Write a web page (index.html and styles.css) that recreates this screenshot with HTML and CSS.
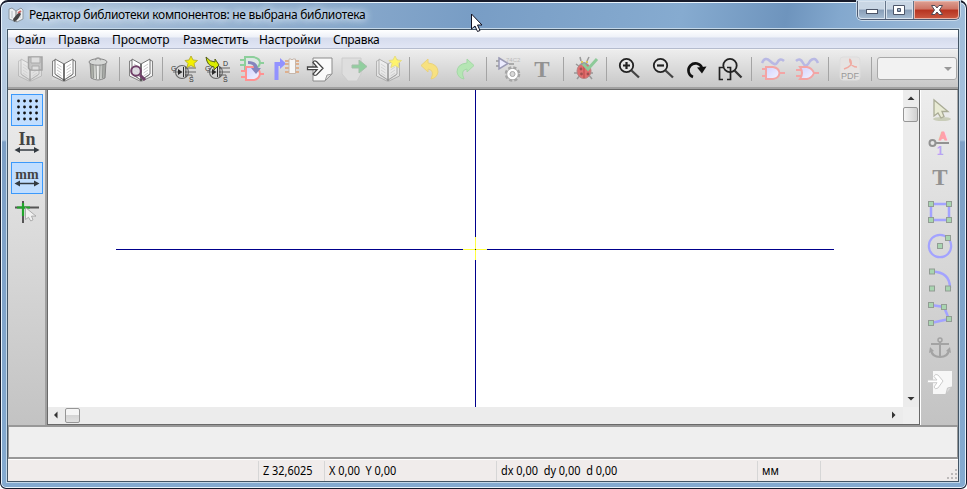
FILE: index.html
```html
<!DOCTYPE html>
<html lang="ru">
<head>
<meta charset="utf-8">
<title>Редактор библиотеки компонентов</title>
<link rel="stylesheet" href="styles.css">
</head>
<body>
<svg class="defs" width="0" height="0">
  <defs>
    <linearGradient id="gate" x1="0" y1="0" x2="1" y2="1"><stop offset="0" stop-color="#d2d2ff"/><stop offset="1" stop-color="#f4f4ff"/></linearGradient>
    <linearGradient id="bin" x1="0" y1="0" x2="1" y2="0"><stop offset="0" stop-color="#95998f"/><stop offset=".45" stop-color="#f0f1ef"/><stop offset="1" stop-color="#959894"/></linearGradient>
    <g id="book">
      <path d="M-12-6V11H12V-6Z" fill="#d8d8d8"/>
      <path d="M-11.500-8L-8-9V6L0 11 8 6V-9L11.500-8V7L1 12H-1L-11.500 7Z" fill="#f4f4f4" stroke="#777" stroke-width=".9"/>
      <path d="M-9-10L0-5 9-10V5L0 11-9 5Z" fill="#fff" stroke="#666" stroke-width=".9"/>
      <path d="M-7-5L-2.500-2M-7-2L-2.500 1M-7 1L-2.500 4M-7 4L-2.500 7M7-5L2.500-2M7-2L2.500 1M7 1L2.500 4M7 4L2.500 7" stroke="#c8c8c8"/>
      <path d="M0-5V12" stroke="#444" stroke-width="1.500"/>
    </g>
    <g id="fet">
      <path d="M-11 3H-5M1-1H12M1 3H12M1 6H8V8" fill="none" stroke="#666" stroke-width="1"/>
      <circle cx="-2" cy="3" r="6.500" fill="none" stroke="#666" stroke-width="1.100"/>
      <path d="M-6 0L-1.500 3-6 6ZM-1-2H0V8H-1ZM1.500-2H2.300V8H1.500Z" fill="#2a2a2a"/>
      <text x="-13" y="1.500" class="pin">G</text><text x="5" y="13" class="pin">S</text>
    </g>
    <path id="star" d="M7-13L9-9 13.500-8.500 10-5.500 11-1.500 7-3.500 3-1.500 4-5.500 1-8.500 5-9Z"/>
    <path id="pointer" d="M-6-10V6L-2 3 1 8 4 6.500 2 1.500H8Z"/>
    <g id="dims"><path d="M-9 9H9" stroke="#333a40" stroke-width="1.500"/><path d="M-12.500 9L-7 6V12ZM12.500 9L7 6V12Z" fill="#333a40"/></g>
    <rect id="node" x="-2.500" y="-2.500" width="5" height="5" fill="#a8d5b0" stroke="#929c94"/>
  </defs>
</svg>
<div class="window">
  <header class="titlebar">
    <svg class="app-icon" viewBox="-8 -8 16 16"><path d="M-7-6L-4-7 0-4 5-7 7-5V4L1 7-7 4Z" fill="#eef1f3" stroke="#8b969f"/><path d="M0-4V7" stroke="#777"/><path d="M-4-4V3M4-4V3" stroke="#b6bcc1"/><path d="M3-3L-3 4-2 7 2 4 5-1Z" fill="#444"/><path d="M2-2L5-4" stroke="#c66" stroke-width="2"/></svg>
    <span class="caption">Редактор библиотеки компонентов: не выбрана библиотека</span>
    <div class="controls">
      <span class="ctl"><svg viewBox="0 0 16 14"><rect x="2.500" y="5.500" width="11" height="4" fill="#fff" stroke="#4c5568"/></svg></span>
      <span class="ctl"><svg viewBox="0 0 16 14"><path d="M1.500 1.500H12.500V10.500H1.500ZM5.500 4.500V7.500H8.500V4.500Z" fill="#fff" fill-rule="evenodd" stroke="#4c5568"/></svg></span>
      <span class="ctl close"><svg viewBox="0 0 16 14"><path d="M2.500 1.500H6L8 4 10 1.500H13.500L10.500 6 13.500 10.500H10L8 8 6 10.500H2.500L5.500 6Z" fill="#fff" stroke="#514a55"/></svg></span>
    </div>
    <svg class="mouse" viewBox="0 0 14 20"><path d="M2.500 1V16L6 13 8.500 18.500 11 17.500 8.500 12H13Z" fill="#fff" stroke="#112"/></svg>
  </header>
  <main class="client">
    <nav class="menu"><span class="m1">Файл</span><span class="m2">Правка</span><span class="m3">Просмотр</span><span class="m4">Разместить</span><span class="m5">Настройки</span><span class="m6">Справка</span></nav>
    <div class="toolbar">
      <svg viewBox="-17 -17 34 34"><g opacity=".3"><use href="#book"/></g><path d="M-1.500-12H12V1H0L-1.500-1Z" fill="#c4c4c4" stroke="#a3a3a3" stroke-width="1.500"/><path d="M1-12H10V-6H1ZM2-3H9V1H2Z" fill="#dedede" stroke="#aaa"/></svg>
      <svg viewBox="-17 -17 34 34"><use href="#book"/></svg>
      <svg viewBox="-17 -17 34 34"><path d="M-8-7H8L7 9Q0 13-7 9Z" fill="url(#bin)" stroke="#888"/><path d="M-5-4L-4.500 9M-2-4L-1.500 10M2-4L1.500 10M5-4L4.500 9" stroke="#8a8d8a" stroke-width=".9"/><ellipse cy="-7" rx="9" ry="3.200" fill="#d6d8d6" stroke="#888"/><path d="M-3-9Q0-13 3-9" fill="#ddd" stroke="#999" stroke-width="1.500"/></svg>
      <i></i>
      <svg viewBox="-17 -17 34 34"><use href="#book"/><circle cx="-5" cy="2" r="4.800" fill="#d8d4dc" fill-opacity=".8" stroke="#704068" stroke-width="2"/><path d="M-1 6L4 11" stroke="#704068" stroke-width="3"/></svg>
      <i></i>
      <svg viewBox="-17 -17 34 34"><use href="#fet"/><use href="#star" fill="#f4f000" stroke="#b9b336"/></svg>
      <svg viewBox="-17 -17 34 34"><use href="#fet"/><text x="5" y="-3" class="pin">D</text><path d="M-12-12Q-8-7-3-7V-10L1-4-4 1V-2Q-11-3-12-12Z" fill="#d9ed00" stroke="#555e15"/></svg>
      <svg viewBox="-17 -17 34 34"><path d="M-12-9H-7M-12-4H-7M8-6H12" stroke="#8dcf9b" stroke-width="2"/><path d="M-7-12H1Q8-11 8-6 7-1 1 0H-7Z" fill="#dde7e4" stroke="#8dcf9b" stroke-width="2"/><path d="M-11 2H-6M-11 8H-6M7 5H12" stroke="#ff9292" stroke-width="2"/><path d="M-6-2H2Q8 0 8 5 7 10 2 11H-6Z" fill="url(#gate)" stroke="#ff9292" stroke-width="2"/><path d="M-4-8Q5-8 6-1H9L4 5-1-1H2Q2-5-4-5Z" fill="#8585bd"/></svg>
      <svg viewBox="-17 -17 34 34"><path d="M-9.500 11V-5H-5" fill="none" stroke="#9292ff" stroke-width="4"/><path d="M-6-11L0-5.500-6 0Z" fill="#9292ff"/><path d="M-1-8H3M-1-5H3M-1-1H3M-1 3H3M9-8H13M9-5H13M9-1H13M9 3H13" stroke="#deb08e" stroke-width="2"/><path d="M3-10H5Q6-8 7-10H9.500V4.500H3Z" fill="#f6f6f6" stroke="#c6b6aa"/></svg>
      <svg viewBox="-17 -17 34 34"><path d="M-7-11H12V5L5 12H-7Z" fill="#fafafa" stroke="#8b8b8b"/><path d="M5 12L7 6 12 5Z" fill="#ddd" stroke="#999"/><path d="M-12.500-2H-3L-7-6.500Q-6-9-3.500-7.500L3-.7-3.500 6Q-6 7-7 5L-3 .7H-12.500Z" fill="#fff" stroke="#444" stroke-width="1.300"/></svg>
      <svg viewBox="-17 -17 34 34"><path d="M-12-11H7V5L3 12H-6L-12 5Z" fill="#dedede" stroke="#ccc"/><path d="M-2-4H5V-9L13-2.500 5 4V-1H-2Z" fill="#91cf9f" stroke="#a4bfa9"/></svg>
      <svg viewBox="-17 -17 34 34"><g opacity=".45"><use href="#book"/></g><use href="#star" fill="#fff46c" stroke="#e6dd83"/></svg>
      <i></i>
      <svg viewBox="-17 -17 34 34"><path d="M-10-3.500L-3-10V-6Q7-5 7 3 6 9 0 10 4 1-3 0V3Z" fill="#f7e180" stroke="#ead27a"/></svg>
      <svg viewBox="-17 -17 34 34"><path d="M9-3.500L2-10V-6Q-8-5-8 3-7 9-1 10-5 1 2 0V3Z" fill="#b5e6b4" stroke="#a4d8a6"/></svg>
      <i></i>
      <svg viewBox="-17 -17 34 34"><text x="-2" y="-7" class="hc">74C2</text><path d="M-12-8H-9M-12-3H-9M1-5H6" stroke="#999" stroke-width="1.300"/><path d="M-9-11L0-5.500-9 0Z" fill="#ececff" stroke="#9a9ab5" stroke-width="1.500"/><circle cx="4.500" cy="5" r="6.300" fill="none" stroke="#a5a5a5" stroke-width="3" stroke-dasharray="3 1.948"/><circle cx="4.500" cy="5" r="5" fill="none" stroke="#a5a5a5" stroke-width="2.200"/><circle cx="4.500" cy="5" r="4" fill="#d8d8d8" stroke="#fff" stroke-width="2.600"/><circle cx="4.500" cy="5" r="2.500" fill="#d8d8d8" stroke="#aaa"/></svg>
      <svg viewBox="-17 -17 34 34"><text x="0" y="8" class="bigt">T</text></svg>
      <i></i>
      <svg viewBox="-17 -17 34 34"><path d="M-9-5L-5-2M-11 4H8M-8 10L-4 5M7 10L3 5M-5-12L-4-8M4-12L2-8" stroke="#999" stroke-width="1.500"/><ellipse cx="-1" cy="2" rx="7" ry="7.500" fill="#e06e6e" stroke="#b88080"/><path d="M-6-4Q-1-10 4-4Z" fill="#999"/><path d="M-4-7H-2M1-7H3" stroke="#d8c65c" stroke-width="2"/><path d="M-1-5V9" stroke="#b44"/><g fill="#a05050"><circle cx="-4" cy="0" r="1.400"/><circle cx="-3.500" cy="5" r="1.400"/><circle cx="3" cy="5" r="1.400"/></g><path d="M-2-5L3 0 12-10" fill="none" stroke="#8dca99" stroke-width="3"/></svg>
      <i></i>
      <svg viewBox="-17 -17 34 34"><circle cx="-1.500" cy="-3.500" r="6.700" fill="#eee" fill-opacity=".5" stroke="#222" stroke-width="1.800"/><path d="M3.500 1.500L11 8.500" stroke="#444" stroke-width="2.300"/><path d="M-5-3.500H2M-1.500-7V0" stroke="#222" stroke-width="2.200"/></svg>
      <svg viewBox="-17 -17 34 34"><circle cx="-1.500" cy="-3.500" r="6.700" fill="#eee" fill-opacity=".5" stroke="#222" stroke-width="1.800"/><path d="M3.500 1.500L11 8.500" stroke="#444" stroke-width="2.300"/><path d="M-5-3.500H2" stroke="#222" stroke-width="2.200"/></svg>
      <svg viewBox="-17 -17 34 34"><path d="M-3 8A7 7 0 1 1 6-1" fill="none" stroke="#111" stroke-width="2.600"/><path d="M1-1.500L10.500-2.500 6 4.500Z" fill="#111"/></svg>
      <svg viewBox="-17 -17 34 34"><path d="M-7-1.500H-10.500V10.500H-7M-3 10.500H.5V-1.500H-3" fill="none" stroke="#222" stroke-width="1.700"/><circle cx="0" cy="-3.500" r="6.700" fill="none" stroke="#222" stroke-width="1.800"/><path d="M4.500 1.500L11.500 8.500" stroke="#333" stroke-width="2.300"/></svg>
      <i></i>
      <svg viewBox="-17 -17 34 34"><path d="M-11-6Q-8-13-3-8T4-6Q7-12 11-8" fill="none" stroke="#b8b8e4" stroke-width="2.500"/><path d="M-11 0H-7M-11 7H-7M7 4H12" stroke="#f3a5a5" stroke-width="2"/><path d="M-7-2H0Q6-1 6.500 4 6 9 0 10H-7Z" fill="url(#gate)" stroke="#f3a5a5" stroke-width="2"/></svg>
      <svg viewBox="-17 -17 34 34"><path d="M-11-8Q-7-12-4-6T3-8Q8-13 11-6" fill="none" stroke="#b8b8e4" stroke-width="2.500"/><path d="M-11 1H-5M-11 7H-5M7 4H12" stroke="#f3a5a5" stroke-width="2"/><path d="M-7-2H0Q5-1 7 4 5 9 0 10H-7Q-3 4-7-2Z" fill="url(#gate)" stroke="#f3a5a5" stroke-width="2"/></svg>
      <i></i>
      <svg viewBox="-17 -17 34 34"><rect x="-10" y="-12" width="20" height="23" rx="3" fill="#e6e3e2" stroke="#ddd"/><path d="M-6 0Q3-3 1-8-1-12 0-7 2-2 7-2" fill="none" stroke="#f0aaa1" stroke-width="1.500"/><text x="0" y="10" class="pdf">PDF</text></svg>
      <i></i>
      <div class="combo"></div>
    </div>
    <section class="work">
      <aside class="left">
        <svg class="on" viewBox="-16 -16 32 32"><path d="M-8.500-9H10.500M-8.500-3H10.500M-8.500 3H10.500M-8.500 9H10.500" stroke="#111" stroke-width="2.800" stroke-linecap="round" stroke-dasharray="0.010 6"/></svg>
        <svg viewBox="-16 -16 32 32"><text x="0" y="0.500" class="unit">In</text><use href="#dims" y="-3"/></svg>
        <svg class="on" viewBox="-16 -16 32 32"><text x="0" y="1" class="unit wide">mm</text><use href="#dims" y="-3.500"/></svg>
        <svg viewBox="-16 -16 32 32"><path d="M-12-4.500H12M-4-11V11" stroke="#555" stroke-width="2"/><path d="M-10-4.500H3M-4-9V4" stroke="#20a52b" stroke-width="2.200"/><use href="#pointer" transform="translate(3 3) scale(.75)" fill="#f1f1f1" stroke="#999"/></svg>
      </aside>
      <div class="canvas">
        <svg class="sheet" viewBox="0 0 855 317"><path d="M427.500 0V147M427.500 170V317M68 159.500H415M439 159.500H786" stroke="#00008c"/><path d="M427.500 147V170M415 159.500H439" stroke="#ffff40"/><path d="M427.500 159V160" stroke="#202040"/></svg>
        <div class="vscroll"><svg viewBox="0 0 16 16"><path d="M4.500 10L8 6.500 11.500 10Z" fill="#333"/></svg><b></b><svg class="end" viewBox="0 0 16 16"><path d="M4.500 6H11.500L8 9.500Z" fill="#333"/></svg></div>
        <div class="hscroll"><svg viewBox="0 0 16 16"><path d="M9.500 4.500V11.500L6 8Z" fill="#333"/></svg><b></b><svg class="end" viewBox="0 0 16 16"><path d="M6 4.500V11.500L9.500 8Z" fill="#333"/></svg></div>
        <div class="corner"></div>
      </div>
      <aside class="right">
        <svg viewBox="-17 -17 34 34"><ellipse cx="2" cy="9" rx="9" ry="2" fill="#c9cdb9"/><use href="#pointer" fill="#e8ead4" stroke="#a9ab95" stroke-width="1.300"/></svg>
        <svg viewBox="-17 -17 34 34"><circle cx="-7.500" cy="-1" r="3" fill="none" stroke="#929292" stroke-width="2"/><path d="M-4.500-1H9" stroke="#929292" stroke-width="2"/><text x="3" y="-4" class="pa">A</text><text x="0" y="11" class="p1">1</text></svg>
        <svg viewBox="-17 -17 34 34"><text x="0" y="7" class="bigt">T</text></svg>
        <svg viewBox="-17 -17 34 34"><path d="M-9-8H9V8H-9Z" fill="none" stroke="#a3a3ff" stroke-width="2.500"/><use href="#node" x="-9" y="-8"/><use href="#node" x="9" y="-8"/><use href="#node" x="-9" y="8"/><use href="#node" x="9" y="8"/></svg>
        <svg viewBox="-17 -17 34 34"><circle r="11.200" fill="none" stroke="#a3a3ff" stroke-width="2.200"/><use href="#node"/><use href="#node" x="8" y="-8"/></svg>
        <svg viewBox="-17 -17 34 34"><path d="M-8-8.500Q10-8 10 8" fill="none" stroke="#a3a3ff" stroke-width="2.500"/><use href="#node" x="-8" y="-8.500"/><use href="#node" x="-8" y="8.500"/><use href="#node" x="8" y="8.500"/></svg>
        <svg viewBox="-17 -17 34 34"><path d="M-9-9L4-7 9 5-9 9" fill="none" stroke="#a3a3ff" stroke-width="2.500"/><use href="#node" x="-9" y="-9"/><use href="#node" x="4" y="-7"/><use href="#node" x="9" y="5"/><use href="#node" x="-9" y="9"/></svg>
        <svg viewBox="-17 -17 34 34"><path d="M0-6V9M-9-4H9M-9 2Q-8 9 0 9T9 2" fill="none" stroke="#a3a3a3" stroke-width="2"/><circle cy="-8" r="2" fill="none" stroke="#a3a3a3" stroke-width="1.500"/><path d="M-11 5L-10-1-6 3ZM11 5L10-1 6 3Z" fill="#a3a3a3"/></svg>
        <svg viewBox="-17 -17 34 34"><path d="M-7-11H12V5L6 12H-7Z" fill="#f7f7f7"/><path d="M6 12L7.500 6 12 5Z" fill="#ddd" stroke="#c5c5c5"/><path d="M-12.500-2H-3L-6-5.500Q-5-9-2-7L3-1-2 6Q-5 8-6 5L-3 .7H-12.500Z" fill="#fff" stroke="#ccc"/></svg>
      </aside>
    </section>
    <div class="messages"></div>
    <footer class="status"><span class="s0"></span><span class="s1"><em>Z 32,6025</em></span><span class="s2"><em>X 0,00&nbsp; Y 0,00</em></span><span class="s3"><em>dx 0,00&nbsp; dy 0,00&nbsp; d 0,00</em></span><span class="s4"><em>мм</em></span><span class="s5"></span><svg class="grip" viewBox="0 0 12 12"><path d="M9 1h2v2H9zM9 5h2v2H9zM5 5h2v2H5zM9 9h2v2H9zM5 9h2v2H5zM1 9h2v2H1z" fill="#bdbaba"/></svg></footer>
  </main>
</div>
</body>
</html>
```
FILE: styles.css
```css
* { box-sizing: border-box; }
body { margin: 0; width: 967px; height: 489px; overflow: hidden; background: #fff; font: 12px "Noto Sans", sans-serif; color: #000; }
svg { display: block; flex: none; }
.defs { position: absolute; }
.window { position: relative; width: 967px; height: 489px; padding: 1px 7px 6px 6px; border: 1px solid #171b2b; border-top-width: 2px; border-radius: 8px 8px 6px 6px; box-shadow: inset 0 0 0 1px #e8f3fc;
  background: linear-gradient(180deg, #ffffff00 0 138px, #7d9fc5 140px, #84aad0), linear-gradient(100deg, #b7cce2 0, #a5bdd7 10%, #789dc5 45%, #86abd0 65%, #6e94bd 75%, #83a8ce 80%, #b4cbe2 100%); }
.titlebar { height: 26px; display: flex; align-items: flex-start; padding-left: 1px; }
.app-icon { width: 16px; height: 16px; margin: 4px 5px 0 0; }
.caption { margin-top: 3px; white-space: nowrap; line-height: 17px; letter-spacing: -.3px; text-shadow: 0 0 6px #dbe7f3, 0 0 8px #dbe7f3, 0 0 10px #dbe7f3; }
.controls { margin: -2px -1px 0 auto; display: flex; width: 103px; height: 19px; border: 1px solid #4c5970; border-top: 0; border-radius: 0 0 5px 5px; box-shadow: 0 0 0 1px #c8d9e9; }
.ctl { width: 28px; padding: 3px 6px; background: linear-gradient(#c9d6e4 0 45%, #899eb7 50%, #a7bdd3); border-right: 1px solid #65758a; box-shadow: inset 0 0 0 1px #d9e3ee; }
.ctl:first-child { border-radius: 0 0 0 4px; }
.ctl svg { width: 16px; height: 14px; }
.ctl.close { flex: 1; padding-left: 15px; border: 0; border-radius: 0 0 4px 0; background: linear-gradient(#dda194, #ce7465 45%, #b63320 50%, #cc5a43); box-shadow: inset 0 0 0 1px #e9b5a9; }
.mouse { position: absolute; left: 468px; top: 11px; width: 14px; height: 20px; z-index: 4; }
.client { width: 952px; height: 453px; border: 1px solid #435565; display: flex; flex-direction: column; background: #eee; box-shadow: 0 0 0 1px #c4d8e9; }
.menu { height: 20px; flex: none; display: flex; padding-left: 7px; line-height: 20px; letter-spacing: -.1px; background: linear-gradient(#fff, #eef1f8 7px, #d6dced 8px, #e1e6f5 18px, #b5bcce 18px 19px, #f5f5f5 19px); }
.menu span { white-space: nowrap; flex: none; }
.m1 { width: 43px; } .m2 { width: 54px; } .m3 { width: 71px; } .m4 { width: 76px; } .m5 { width: 74px; } .m6 { width: 50px; letter-spacing: -.3px; }
.toolbar { height: 40px; flex: none; display: flex; padding: 1px 0 0 5px; background: linear-gradient(#ededed, #c7c7c7 37px, #a0a0a0 37px 39px, #696969 39px); }
.toolbar > svg { width: 34px; height: 34px; margin-top: 1px; }
.toolbar i { width: 9px; height: 24px; margin-top: 6px; flex: none; background: linear-gradient(#a4a4a4, #a4a4a4) 4px 0 / 1px 100% no-repeat; }
.combo { width: 80px; height: 23px; margin: 6px 0 0 1px; border: 1px solid #a9a9a9; border-radius: 3px; background: #f2f2f2; position: relative; }
.combo::after { content: ""; position: absolute; right: 4px; top: 9px; border: 4px solid transparent; border-top-color: #999; border-bottom: 0; }
.work { height: 335px; flex: none; display: flex; }
.left { width: 39px; padding: 4px 3px; background: linear-gradient(#ededed, #c3c3c3); border-right: 2px solid #a0a0a0; }
.left svg { width: 32px; height: 32px; margin-bottom: 2px; }
.left svg.on { background: #c1deff; box-shadow: inset 0 0 0 1px #3b99fb; }
.canvas { width: 873px; display: grid; grid-template: 317px 17px / 855px 16px; border-left: 1px solid #696969; border-right: 1px solid #696969; border-bottom: 1px solid #696969; background: #fff; }
.sheet { width: 855px; height: 317px; shape-rendering: crispEdges; }
.vscroll, .hscroll { display: flex; background: #ececec; }
.vscroll { flex-direction: column; }
.canvas svg:not(.sheet) { width: 16px; height: 16px; }
.canvas .end { margin-top: auto; }
.hscroll .end { margin: 0 0 0 auto; }
.hscroll { padding-right: 1px; }
.vscroll b { width: 15px; height: 15px; border: 1px solid #969696; border-radius: 2px; background: linear-gradient(90deg, #f4f4f4, #d0d0d0); margin-top: 1px; }
.hscroll b { width: 15px; height: 15px; border: 1px solid #969696; border-radius: 2px; background: linear-gradient(#f5f5f5 45%, #d5d5d5 50%, #e0e0e0); margin: 1px 0 0 1px; }
.corner { background: #efefef; }
.right { width: 38px; border-left: 1px solid #fff; border-right: 1px solid #aaa; padding: 3px 0 0 2px; background: linear-gradient(#ededed, #c3c3c3); }
.right svg { width: 34px; height: 34px; }
.messages { height: 34px; flex: none; border: 1px solid #989898; border-width: 2px 1px 2px; background: #efefef; }
.status { height: 22px; flex: none; padding-top: 1px; display: flex; position: relative; background: #f0eceb; border-top: 1px solid #fff; line-height: 20px; }
.status span { border-right: 1px solid #d6d6d6; padding-left: 4px; white-space: nowrap; height: 20px; }
.status em { display: inline-block; font-style: normal; transform-origin: 0 0; transform: scaleX(.91); }
.s0 { width: 251px; } .s1 { width: 66px; } .s2 { width: 172px; } .s3 { width: 261px; } .s4 { width: 63px; }
.status .s5 { border: 0; }
.grip { position: absolute; right: 0; bottom: 1px; width: 12px; height: 12px; }
.pin { font: 7px "Liberation Sans", sans-serif; fill: #333; }
.hc { font: 6px "Liberation Sans", sans-serif; fill: #bbb; }
.bigt { font: bold 23px "Liberation Serif", serif; text-anchor: middle; fill: #929292; }
.pdf { font: 9px "Liberation Sans", sans-serif; text-anchor: middle; fill: #999; }
.unit { font: bold 18px "Liberation Serif", serif; text-anchor: middle; fill: #444; }
.unit.wide { font-size: 14px; }
.pa { font: bold 11px "Liberation Sans", sans-serif; text-anchor: middle; fill: #ffa0a8; stroke: #ffa0a8; }
.p1 { font: bold 12px "Liberation Sans", sans-serif; text-anchor: middle; fill: #b9a3f4; }
```
